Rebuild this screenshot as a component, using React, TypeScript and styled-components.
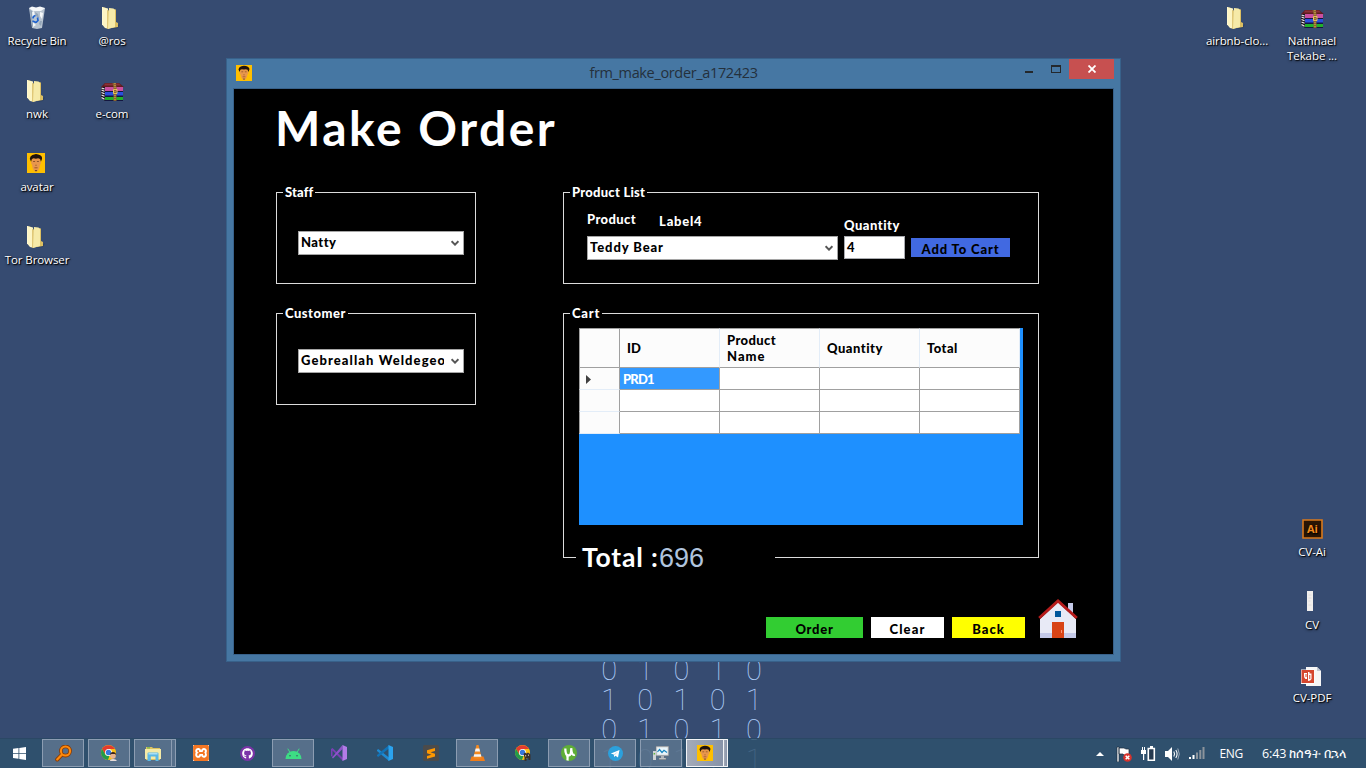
import React from 'react';
import styled, { createGlobalStyle, css } from 'styled-components';
import { FaGithub } from 'react-icons/fa';
import { SiXampp } from 'react-icons/si';

const gothic = '"Century Gothic", "URW Gothic", Lato, "Liberation Sans", sans-serif';
const system = '"Segoe UI", "Open Sans", "Noto Sans", sans-serif';

const GlobalStyle = createGlobalStyle`
  * { box-sizing: border-box; }
  body { margin: 0; overflow: hidden; }
  svg { display: block; flex: none; }
`;

/* ---------- Desktop ---------- */

const Desktop = styled.div`
  position: relative;
  display: flex;
  flex-direction: column;
  width: 1366px;
  height: 768px;
  overflow: hidden;
  background: #364b71;
  font-family: ${system};
`;

const IconGrid = styled.div`
  flex: 1;
  display: grid;
  grid-template-columns: repeat(18, 75px);
  grid-template-rows: repeat(10, 73px);
`;

const Shortcut = styled.div<{ $col: number; $row: number }>`
  grid-column: ${p => p.$col};
  grid-row: ${p => p.$row};
  display: flex;
  flex-direction: column;
  align-items: center;
  gap: 3px;
  padding: 6px 1px 0 0;
  color: #fff;
  font-size: 11.5px;
  line-height: 15px;
  letter-spacing: -0.08px;
  text-align: center;
  white-space: nowrap;
  text-shadow: 1px 1px 1px #000, 0 1px 3px rgba(0, 0, 0, 0.8);
`;

const ShortcutIcon = styled.div<{ $top?: number; $right?: number }>`
  height: 24px;
  padding: ${p => p.$top ?? 0}px ${p => p.$right ?? 0}px 0 0;
`;

const ShortcutName = styled.span`
  white-space: pre-line;
`;

const Wallpaper = styled.div`
  position: absolute;
  left: 591px;
  top: 655px;
  display: grid;
  grid-template-columns: repeat(5, 36.2px);
  grid-auto-rows: 30px;
  justify-items: center;
  color: #b0cffa;
  font: 100 29px/30px Roboto, Lato, sans-serif;
`;

/* ---------- Window ---------- */

const Window = styled.section`
  position: absolute;
  left: 226px;
  top: 58px;
  display: flex;
  flex-direction: column;
  width: 895px;
  height: 604px;
  padding: 0 6px 6px;
  border: 1px solid #38618a;
  background: #4677a3;
`;

const TitleBar = styled.header`
  display: grid;
  grid-template-columns: 145px 1fr 145px;
  height: 29px;
  flex: none;
`;

const TitleIcon = styled.div`
  padding: 6px 0 0 3px;
`;

const TitleText = styled.div`
  text-align: center;
  color: #24303c;
  font-size: 14.5px;
  line-height: 28px;
  letter-spacing: -0.35px;
`;

const Controls = styled.div`
  display: flex;
  justify-content: flex-end;
`;

const Control = styled.button<{ $close?: boolean }>`
  display: flex;
  align-items: center;
  justify-content: center;
  width: ${p => (p.$close ? 45 : 27)}px;
  height: 20px;
  padding: 0;
  border: 0;
  background: ${p => (p.$close ? '#c75050' : 'transparent')};
`;

const Client = styled.main`
  flex: 1;
  display: flex;
  flex-direction: column;
  border: 1px solid #38618a;
  background: #000;
  color: #fff;
  font: 900 13px/16px ${gothic};
`;

const Label = styled.span<{ $track?: number }>`
  letter-spacing: ${p => p.$track ?? 0.45}px;
  white-space: nowrap;
`;

const Heading = styled.h1`
  margin: 0;
  height: 103px;
  padding: 9px 0 0 41px;
  font: 700 48px/60px ${gothic};
  letter-spacing: 2.5px;
`;

const Form = styled.div`
  display: grid;
  grid-template-columns: 200px 476px;
  column-gap: 87px;
  row-gap: 29px;
  padding-left: 42px;
  align-items: start;
`;

const Group = styled.div<{ $height: number; $pad: string }>`
  position: relative;
  height: ${p => p.$height}px;
  padding: ${p => p.$pad};
  border: 1px solid #dcdcdc;
`;

const Legend = styled.div`
  position: absolute;
  left: 6px;
  top: -9px;
  padding: 0 2px;
  background: #000;
`;

const Select = styled.div<{ $width: number }>`
  display: flex;
  align-items: center;
  justify-content: space-between;
  width: ${p => p.$width}px;
  height: 24px;
  padding: 0 4px 0 2px;
  border: 1px solid #a5a5a5;
  background: #fff;
  color: #000;
`;

const SelectValue = styled.div`
  width: 143px;
  overflow: hidden;
  line-height: 18px;
  margin-top: -2px;
`;

const ProductRow = styled.div`
  display: flex;
  align-items: flex-start;
  gap: 6px;
`;

const Field = styled.div`
  display: flex;
  flex-direction: column;
`;

const FieldLabels = styled.div<{ $top: number }>`
  display: flex;
  gap: 23px;
  height: 43px;
  padding-top: ${p => p.$top}px;
`;

const Lowered = styled.div`
  padding-top: 2px;
`;

const TextInput = styled.div`
  width: 61px;
  height: 23px;
  padding: 2px 2px;
  border: 1px solid #a9abb0;
  background: #fff;
  color: #000;
`;

const buttonColors = { blue: '#4169e1', green: '#32cd32', white: '#fff', yellow: '#ff0' };

const Button = styled.button<{ $tone: keyof typeof buttonColors; $width: number; $compact?: boolean }>`
  display: flex;
  align-items: flex-end;
  justify-content: center;
  width: ${p => p.$width}px;
  height: ${p => (p.$compact ? 19 : 21)}px;
  padding: 0;
  border: 0;
  background: ${p => buttonColors[p.$tone]};
  color: #000;
  font: inherit;
  line-height: ${p => (p.$compact ? 15 : 17)}px;
`;

const AddSlot = styled.div`
  padding-top: 45px;
`;

/* ---------- Cart table ---------- */

const CartPane = styled.div`
  width: 444px;
  height: 197px;
  background: #1e90ff;
`;

const Table = styled.div`
  display: grid;
  grid-template-columns: 41px repeat(4, 100px);
  grid-template-rows: 40px repeat(3, 22px);
  width: 441px;
`;

const HeadCell = styled.div<{ $corner?: boolean }>`
  display: flex;
  align-items: center;
  padding-left: 7px;
  border: 1px solid #a0a0a0;
  border-left: ${p => (p.$corner ? '1px solid #a0a0a0' : '0')};
  border-right-color: ${p => (p.$corner ? '#a0a0a0' : '#e3edf8')};
  background: #fcfcfc;
  color: #000;
`;

const RowHead = styled.div`
  display: flex;
  align-items: center;
  padding: 1px 0 0 6px;
  border: 1px solid #a0a0a0;
  border-top: 0;
  border-bottom-color: #e3edf8;
  background: #fcfcfc;
`;

const Cell = styled.div<{ $selected?: boolean }>`
  display: flex;
  align-items: center;
  padding: 1px 0 0 3px;
  border-right: 1px solid #a0a0a0;
  border-bottom: 1px solid #a0a0a0;
  background: ${p => (p.$selected ? '#3399ff' : '#fff')};
  color: #fff;
`;

const TotalBar = styled.div`
  position: absolute;
  left: 12px;
  bottom: -16px;
  display: flex;
  align-items: baseline;
  width: 199px;
  height: 32px;
  padding-left: 6px;
  background: #000;
  line-height: 32px;
`;

const TotalCaption = styled.div`
  width: 77px;
  font-size: 26.5px;
  font-weight: 700;
  letter-spacing: 0.85px;
  white-space: nowrap;
`;

const TotalValue = styled.div`
  color: #b0c4de;
  font: 400 27px/32px "Liberation Sans", Arial, sans-serif;
`;

const Actions = styled.footer`
  display: flex;
  align-items: flex-end;
  justify-content: flex-end;
  gap: 8px;
  margin-top: auto;
  padding: 0 35px 16px 0;
`;

const HomeLink = styled.div`
  margin-left: 5px;
`;

/* ---------- Taskbar ---------- */

const Taskbar = styled.nav`
  position: relative;
  display: flex;
  align-items: stretch;
  height: 30px;
  flex: none;
  border-top: 1px solid #2b4865;
  background: rgba(46, 81, 109, 0.84);
`;

const StartButton = styled.div`
  display: flex;
  align-items: center;
  width: 42px;
  padding-left: 13px;
`;

const Tasks = styled.div`
  display: flex;
  gap: 4px;
`;

type TaskState = 'idle' | 'open' | 'active';

const frame = css<{ $state: TaskState }>`
  border: 1px solid ${p => (p.$state === 'active' ? '#f2f4f7' : '#8c9db2')};
  background: ${p =>
    p.$state === 'active' ? 'linear-gradient(90deg, #a4abb9, #8793a8)' : 'rgba(112, 131, 157, 0.62)'};
`;

const Task = styled.div<{ $state: TaskState; $stacked?: boolean }>`
  display: flex;
  align-items: center;
  justify-content: center;
  width: ${p => (p.$stacked ? 38 : 42)}px;
  height: 28px;
  ${p => p.$state !== 'idle' && frame}
`;

const TaskGroup = styled.div`
  display: flex;
  width: 42px;
`;

const StackEdge = styled.div<{ $state: TaskState }>`
  flex: none;
  width: 4px;
  height: 28px;
  ${frame}
  border-left: 0;
`;

const Tray = styled.div`
  display: flex;
  align-items: center;
  gap: 9px;
  margin-left: auto;
  padding-right: 21px;
  color: #fff;
  font-size: 12px;
`;

const Overflow = styled.div`
  margin-right: 3px;
`;

const Language = styled.span`
  margin-left: 5px;
  letter-spacing: -0.3px;
`;

const Clock = styled.span`
  width: 83px;
  margin-left: 10px;
  font-size: 12.5px;
  letter-spacing: -0.12px;
  white-space: nowrap;
`;

const GithubDisc = styled.div`
  display: flex;
  align-items: center;
  justify-content: center;
  width: 15px;
  height: 15px;
  border-radius: 50%;
  background: #7b34a8;
  color: #fff;
`;

const XamppTile = styled.div`
  display: flex;
  width: 16px;
  height: 16px;
  background: #fff;
  color: #f37623;
`;

/* ---------- Drawings ---------- */

const Avatar = ({ w = 16, h = 16 }: { w?: number; h?: number }) => (
  <svg width={w} height={h} viewBox="0 0 16 16" preserveAspectRatio="none">
    <path fill="#ffbf00" d="M0 0h16v16H0z" />
    <path fill="#e8964c" d="M4.500 4.500q3.500-1.500 7 0l.3 2 .7.300-.4 2.200-.6.200q-.3 3.800-2 5-1.500 1.100-3 0-1.700-1.200-2-5l-.6-.2-.4-2.200.7-.3z" />
    <path fill="#20120d" d="M3.600 7 2.500 4.500l.6-1.700L4.800 1.500l1.600-.4L8 .8l2 .3 1.800.7L13.200 3l.2 1.600L12.400 7l-.8-2.200-1.700-.6-2 .3-2-.3-1.500.6z" />
    <path stroke="#6b3a1e" strokeWidth=".6" d="M5.400 6.800h1.800M8.800 6.800h1.800M7.500 9.800h1" />
    <path fill="#8f4f2a" d="M6.600 11.500h2.800v.7H6.600z" />
    <path fill="#3a2014" d="M6.800 13.700h2.400L8 14.700z" />
  </svg>
);

const Folder = () => (
  <svg width="22" height="24" viewBox="0 0 22 24">
    <path fill="#26354f" opacity=".5" d="M15 21l5-3-2 4-6 1z" />
    <path fill="#dcbf62" d="M13 3l3 .5V16l2 1v4l-6 1z" />
    <path fill="#d8bb63" d="M2 1l4 1v18l-4-2z" />
    <path fill="#fdf5c5" d="M2 1l6 1.500L7 22.500 5 22l-3-3.500z" />
    <path fill="#e0c878" d="M7 4l4 1v17l-4 1z" />
    <path fill="#f6eaa8" d="M9 2l4.500.5L15 4v17l-7 2z" />
    <path fill="#fff8cf" d="M2 1h1v18H2z" />
  </svg>
);

const RecycleBin = () => (
  <svg width="20" height="24" viewBox="0 0 20 24">
    <path fill="#c3ced9" fillOpacity=".92" d="M2 2h16l-3 20-5 1-5-1z" />
    <path fill="#f5f8fa" d="M2 2l3-1.500 4 1 4-1 5 1.500-4 3H6zM4 7l3-2 1 5-3 4zM13 6l3 1-1 6-2-3zM6 16l3 3-3 2z" />
    <path fill="#93a5b8" d="M8 6l3 2 1 4-3-2zM13 15h2l-1 5-2-2zM3 4l2 1 1 16-1-1z" />
    <path fill="none" stroke="#1e62cf" strokeWidth="1.700" d="M8.500 9.500a3 3 0 00-2.500 3M5.500 15l3.500 1.500M10.500 11.500l.5 3-2 2" />
  </svg>
);

const Archive = () => (
  <svg width="23" height="18" viewBox="0 0 23 18">
    <path fill="#5e1c20" d="M4 0h14l5 4H0z" />
    <path fill="#8b3137" d="M4 .5h14l2 2H3z" />
    <path fill="#1c1620" d="M0 4h4v14l-4-3z" />
    <path fill="#c94f9f" d="M4 4h18v4H4z" />
    <path fill="#2a4fdc" d="M4 9h18v4H4z" />
    <path fill="#20b02a" d="M4 14h18v3.500H4z" />
    <path fill="#141640" d="M4 8h18v1H4zM4 12.500h18V14H4zM4 17h18v1H4z" />
    <path stroke="#f0edf0" strokeWidth="1.200" d="M.5 5l3 1M.5 7l3 1.200M.5 9.500l3 1.200M.5 12l3 1.200M.5 14.500l3 1.800" />
    <path fill="#8b642e" d="M11.500 0h3l1 4v14h-3V4z" />
    <path fill="none" stroke="#e8c75c" strokeWidth="1" d="M12.500 6.500h3.500v4h-3.500z" />
    <path stroke="#d8b050" strokeDasharray="1 1" d="M14 0v18" />
  </svg>
);

const IllustratorFile = () => (
  <svg width="21" height="20" viewBox="0 0 21 20">
    <path fill="#2a1504" stroke="#d9791c" strokeWidth="1.600" d="M1 1h19v18H1z" />
    <text x="10.500" y="13.500" fill="#f28a1c" fontFamily="Open Sans" fontSize="11" fontWeight="700" textAnchor="middle">Ai</text>
  </svg>
);

const CvFile = () => (
  <svg width="6" height="20" viewBox="0 0 6 20">
    <path fill="#f1efed" d="M0 0h6v20H0z" />
    <path stroke="#ddd7d5" strokeWidth=".8" d="M1.500 4h3M1.500 7h3M1.500 10h2M1.500 14h3" />
  </svg>
);

const PdfFile = () => (
  <svg width="20" height="19" viewBox="0 0 20 19">
    <path fill="#f7f7f7" d="M5 0h11l4 4v15H5z" />
    <path fill="#c3c9d2" d="M16 0l4 4h-4z" />
    <path fill="#fff" d="M0 2.500h13.500v14.500H0z" />
    <path fill="#d5472f" d="M.5 3h12.500v13H.5z" />
    <path fill="#fff" d="M3 6h3v6H4.500Q3 11 3 9zM7 5h1.500v1.500h2V12q-1 2-3.500 2z" />
    <path stroke="#d5472f" d="M5 7v3M8.800 8v4" />
  </svg>
);

const House = () => (
  <svg width="40" height="39" viewBox="0 0 40 39">
    <path fill="#c5cae9" d="M30 4h5v15h-5z" />
    <path fill="#e8eaf6" d="M2 20L20 3l18 17v19H2z" />
    <path fill="#c5cae9" d="M2 34h36v5H2z" />
    <path fill="#d84315" d="M14 23h12v16H14z" />
    <path fill="#01579b" d="M17 12h6v6h-6z" />
    <path fill="none" stroke="#b71c1c" strokeWidth="3" d="M1.200 19L20 2l18.800 17" />
    <path fill="#ffab91" d="M23 31h.8v3H23z" />
  </svg>
);

const Chevron = () => (
  <svg width="8" height="6" viewBox="0 0 8 6">
    <path fill="none" stroke="#555" strokeWidth="1.900" d="M.6 1.200L4 4.700l3.400-3.500" />
  </svg>
);

const WindowsLogo = () => (
  <svg width="13" height="13" viewBox="0 0 13 13">
    <path fill="#fff" d="M0 1.800L5.500 1v5H0zM6.300.9L13 0v6H6.300zM0 6.800h5.500v5L0 11zM6.300 6.800H13V13l-6.700-.9z" />
  </svg>
);

const Search = () => (
  <svg width="17" height="17" viewBox="0 0 17 17">
    <path stroke="#8b3c05" strokeWidth="4" strokeLinecap="round" d="M2.200 14.500l4.500-4.700" />
    <circle cx="10.500" cy="6" r="4.600" fill="none" stroke="#8b3c05" strokeWidth="3.600" />
    <path stroke="#ff8a0c" strokeWidth="2.200" strokeLinecap="round" d="M2.200 14.500l4.500-4.700" />
    <circle cx="10.500" cy="6" r="4.600" fill="none" stroke="#ff8a0c" strokeWidth="2" />
  </svg>
);

const Chrome = ({ badge }: { badge: 'face' | 'dark' }) => (
  <svg width="16" height="16" viewBox="0 0 16 16">
    <circle cx="7.500" cy="7.500" r="7.500" fill="#fbc116" />
    <path fill="#e33b2e" d="M1 3.800A7.500 7.500 0 0114 4H7.500L4.300 9.300z" />
    <path fill="#229b4a" d="M1 3.800l3.300 5.600 4 1.900L7 15A7.500 7.500 0 011 3.800z" />
    <circle cx="7.500" cy="7.500" r="3.500" fill="#fff" />
    <circle cx="7.500" cy="7.500" r="2.700" fill="#3778dd" />
    {badge === 'face' ? (
      <>
        <circle cx="12" cy="11" r="2.800" fill="#e9b28d" />
        <path fill="#3c231a" d="M9 10q.2-3 3-3t3.200 3l-1.200-1h-3.500z" />
        <path fill="#e8dcd8" d="M9 16q0-2 3-2t4 2z" />
      </>
    ) : (
      <>
        <path fill="#3a302d" d="M8.500 9l1.500-1.500 1.500 1 1.500-1 2.500 2V15h-2v-2h-2v3h-2v-3.500z" />
        <path fill="#b8a79a" d="M10 10h1.200v1.500H10zM13 9.500h1V11h-1z" />
      </>
    )}
  </svg>
);

const Explorer = () => (
  <svg width="16" height="15" viewBox="0 0 16 15">
    <path fill="#dcc25f" d="M1 1h6l1 1h7v12H1z" />
    <path fill="#f5eaa6" d="M0 3h16v10H0z" />
    <path fill="#58b848" d="M2 1.400h3v1H2z" />
    <path fill="#5bb8e6" d="M2.500 7.500q0-1 1-1h9q1 0 1 1V15h-3v-4.500H5.800V15H2.500z" />
    <path fill="#a8def5" d="M3.500 7h9v1.500h-9z" />
  </svg>
);

const Android = () => (
  <svg width="17" height="11" viewBox="0 0 17 11">
    <path fill="#3ddc84" d="M.5 11a8 8 0 0116 0z" />
    <path stroke="#3ddc84" strokeWidth="1" strokeLinecap="round" d="M3 1l2 3.500M14 1l-2 3.500" />
    <circle cx="5" cy="7.700" r=".8" fill="#3b5a66" />
    <circle cx="12" cy="7.700" r=".8" fill="#3b5a66" />
  </svg>
);

const VisualStudio = () => (
  <svg width="16" height="16" viewBox="0 0 16 16">
    <path fill="#7a3fb5" d="M0 4l1.500-1L12 13v3L1.500 5.500V12L0 11z" />
    <path fill="#8f52cc" d="M1 12.500L11.500 0v4L2 13.500z" />
    <path fill="#b27be8" d="M11.500 0L16 2v12l-4.500 2z" />
  </svg>
);

const VSCode = () => (
  <svg width="16" height="16" viewBox="0 0 16 16">
    <path fill="#1f8ad2" d="M0 5l1.200-1L12 12.500V16L0 6z" />
    <path fill="#1272b6" d="M0 11l1.200 1L12 3.500V0L0 10z" />
    <path fill="#2ba3ef" d="M11.500 0L16 2v12l-4.500 2z" />
  </svg>
);

const Sublime = () => (
  <svg width="16" height="16" viewBox="0 0 16 16">
    <rect width="16" height="16" rx="1.500" fill="#4b4b4b" />
    <path fill="#ff9800" d="M4 5.300L12 3v3L7.500 7.300 12 8.700v2.800L4 13.800V11l4.500-1.300L4 8.300z" />
  </svg>
);

const Vlc = () => (
  <svg width="15" height="16" viewBox="0 0 15 16">
    <path fill="#ef7d1a" d="M1.500 11.500h12L15 16H0z" />
    <path fill="#f58a1f" d="M6.500 0h2l3.300 13q-4.300 1.500-8.600 0z" />
    <path fill="#f4f4f4" d="M5.700 3.500h3.600l.8 3H4.900zM4.200 9.300h6.600l.6 2.500H3.600z" />
  </svg>
);

const UTorrent = () => (
  <svg width="16" height="16" viewBox="0 0 16 16">
    <circle cx="8" cy="8" r="8" fill="#5fae36" />
    <path fill="none" stroke="#fff" strokeWidth="2.300" d="M4.300 3.500q0 7 3.200 7t2.700-7.300q.2 7.800 3.600 6.500M6 10.500q1 1.500.5 5" />
  </svg>
);

const Telegram = () => (
  <svg width="15" height="15" viewBox="0 0 15 15">
    <circle cx="7.500" cy="7.500" r="7.500" fill="#2ba0dc" />
    <path fill="#fff" d="M2.800 7.400L11.500 4 10 11.500 7.500 9.700l-1.300 1.200-.4-2.300z" />
    <path fill="#b6d9ee" d="M5.800 8.600L10 5.500 6.800 9z" />
  </svg>
);

const Monitor = () => (
  <svg width="16" height="14" viewBox="0 0 16 14">
    <path fill="#d9dcde" stroke="#777" strokeWidth=".5" d="M3 .3h12.700v9.500H3zM6 12h7v1.500H6z" />
    <path fill="#eaf6fc" d="M4.300 1.600h10v6.900h-10z" />
    <path fill="none" stroke="#1a86c0" strokeWidth="1.200" d="M4.500 6l2-2.500 2.500 3 2-2.200 3 2.200" />
    <path fill="#cfd2d4" d="M0 5h3v9H0z" />
    <path fill="#5fb440" d="M.6 7h1.500v1.500H.6z" />
    <path fill="#aeb3b7" d="M8 10h3v2H8z" />
  </svg>
);

const TrayArrow = () => (
  <svg width="8" height="4" viewBox="0 0 8 4"><path fill="#fff" d="M4 0l4 4H0z" /></svg>
);
const Flag = () => (
  <svg width="16" height="16" viewBox="0 0 16 16">
    <path fill="#fff" stroke="#1d2c3d" strokeWidth=".7" d="M1 1h2v15H1zM3 2h5l2 1h3v6H8L7 8H3z" />
    <circle cx="11.500" cy="11.500" r="4.300" fill="#d8322c" />
    <path stroke="#fff" strokeWidth="1.500" d="M9.700 9.700l3.600 3.600M13.300 9.700l-3.600 3.600" />
  </svg>
);
const Battery = () => (
  <svg width="15" height="15" viewBox="0 0 15 15">
    <path fill="#24384e" stroke="#fff" strokeWidth="1.600" d="M7.300 2.500h6v11.700h-6z" />
    <path fill="#fff" d="M9 0h3v2H9zM0 4h5v4H0zM1 1h1v3H1zM3 1h1v3H3zM2 8h1.200v6H2z" />
  </svg>
);
const Speaker = () => (
  <svg width="15" height="14" viewBox="0 0 15 14">
    <path fill="#fff" d="M0 4h3l4-4v14l-4-4H0z" />
    <path fill="none" stroke="#fff" strokeWidth="1.100" d="M8.800 4.500q1.500 2.500 0 5M10.800 3q2.600 4 0 8" />
    <path fill="none" stroke="#a9b5c2" strokeWidth=".9" d="M12.800 1.500q3 5.500 0 11" />
  </svg>
);
const Signal = () => (
  <svg width="16" height="13" viewBox="0 0 16 13">
    <path fill="#fff" d="M0 10h2v2H0zM3.500 8h2v4h-2z" />
    <path fill="#8c949c" d="M7 5.500h2V12H7zM10.300 3h2v9h-2zM13.500 0h2v12h-2z" />
  </svg>
);

/* ---------- Page ---------- */

const binary = ['01010', '10101', '01010', '10101'];

const tasks: { name: string; state: TaskState; stacked?: boolean; icon: React.ReactNode }[] = [
  { name: 'search', state: 'open', icon: <Search /> },
  { name: 'chrome', state: 'open', icon: <Chrome badge="face" /> },
  { name: 'explorer', state: 'open', stacked: true, icon: <Explorer /> },
  { name: 'xampp', state: 'idle', icon: <XamppTile><SiXampp size={16} /></XamppTile> },
  { name: 'github', state: 'idle', icon: <GithubDisc><FaGithub size={11} /></GithubDisc> },
  { name: 'android', state: 'open', icon: <Android /> },
  { name: 'visual-studio', state: 'idle', icon: <VisualStudio /> },
  { name: 'vscode', state: 'idle', icon: <VSCode /> },
  { name: 'sublime', state: 'idle', icon: <Sublime /> },
  { name: 'vlc', state: 'open', icon: <Vlc /> },
  { name: 'chrome-alt', state: 'idle', icon: <Chrome badge="dark" /> },
  { name: 'utorrent', state: 'open', icon: <UTorrent /> },
  { name: 'telegram', state: 'open', icon: <Telegram /> },
  { name: 'monitor', state: 'open', icon: <Monitor /> },
  { name: 'order-app', state: 'active', stacked: true, icon: <Avatar /> },
];

type ShortcutData = { col: number; row: number; name: string; icon: React.ReactNode; top?: number; right?: number };

const shortcuts: ShortcutData[] = [
  { col: 1, row: 1, name: 'Recycle Bin', icon: <RecycleBin /> },
  { col: 2, row: 1, name: '@ros', icon: <Folder />, right: 2 },
  { col: 1, row: 2, name: 'nwk', icon: <Folder />, right: 2 },
  { col: 2, row: 2, name: 'e-com', icon: <Archive />, top: 4 },
  { col: 1, row: 3, name: 'avatar', icon: <Avatar w={18} h={20} />, top: 1, right: 2 },
  { col: 1, row: 4, name: 'Tor Browser', icon: <Folder />, right: 2 },
  { col: 17, row: 1, name: 'airbnb-clo...', icon: <Folder />, right: 2 },
  { col: 18, row: 1, name: 'Nathnael\nTekabe ...', icon: <Archive />, top: 4 },
  { col: 18, row: 8, name: 'CV-Ai', icon: <IllustratorFile />, top: 2 },
  { col: 18, row: 9, name: 'CV', icon: <CvFile />, top: 1, right: 4 },
  { col: 18, row: 10, name: 'CV-PDF', icon: <PdfFile />, top: 4, right: 2 },
];

export default function App() {
  return (
    <Desktop>
      <GlobalStyle />
      <Wallpaper>
        {binary.flatMap((line, r) => [...line].map((digit, c) => <span key={`${r}-${c}`}>{digit}</span>))}
      </Wallpaper>
      <IconGrid>
        {shortcuts.map(s => (
          <Shortcut key={s.name} $col={s.col} $row={s.row}>
            <ShortcutIcon $top={s.top} $right={s.right}>{s.icon}</ShortcutIcon>
            <ShortcutName>{s.name}</ShortcutName>
          </Shortcut>
        ))}
      </IconGrid>

      <Window>
        <TitleBar>
          <TitleIcon><Avatar /></TitleIcon>
          <TitleText>frm_make_order_a172423</TitleText>
          <Controls>
            <Control>
              <svg width="8" height="10" viewBox="0 0 8 10"><path fill="#24282c" d="M0 7h8v2H0z" /></svg>
            </Control>
            <Control>
              <svg width="10" height="8" viewBox="0 0 10 8"><path fill="#24282c" fillRule="evenodd" d="M0 0h10v8H0zM1 2h8v5H1z" /></svg>
            </Control>
            <Control $close>
              <svg width="8" height="8" viewBox="0 0 8 8"><path stroke="#fff" strokeWidth="1.800" d="M.5.5l7 7M7.500.5l-7 7" /></svg>
            </Control>
          </Controls>
        </TitleBar>

        <Client>
          <Heading>Make Order</Heading>
          <Form>
            <Group $height={92} $pad="38px 0 0 21px">
              <Legend><Label $track={0.15}>Staff</Label></Legend>
              <Select $width={166}><SelectValue><Label>Natty</Label></SelectValue><Chevron /></Select>
            </Group>

            <Group $height={92} $pad="0 0 0 23px">
              <Legend><Label $track={0.25}>Product List</Label></Legend>
              <ProductRow>
                <Field>
                  <FieldLabels $top={18}>
                    <Label $track={0.4}>Product</Label>
                    <Lowered><Label $track={0.75}>Label4</Label></Lowered>
                  </FieldLabels>
                  <Select $width={251}><SelectValue><Label $track={0.9}>Teddy Bear</Label></SelectValue><Chevron /></Select>
                </Field>
                <Field>
                  <FieldLabels $top={24}><Label $track={0.5}>Quantity</Label></FieldLabels>
                  <TextInput>4</TextInput>
                </Field>
                <AddSlot>
                  <Button $tone="blue" $width={99} $compact><Label $track={0.85}>Add To Cart</Label></Button>
                </AddSlot>
              </ProductRow>
            </Group>

            <Group $height={92} $pad="35px 0 0 21px">
              <Legend><Label $track={0.5}>Customer</Label></Legend>
              <Select $width={166}><SelectValue><Label $track={1.08}>Gebreallah Weldegeorgis</Label></SelectValue><Chevron /></Select>
            </Group>

            <Group $height={245} $pad="14px 0 0 15px">
              <Legend><Label $track={0.8}>Cart</Label></Legend>
              <CartPane>
                <Table>
                  <HeadCell $corner />
                  <HeadCell><Label $track={0}>ID</Label></HeadCell>
                  <HeadCell><div><Label $track={0.4}>Product</Label><br /><Label $track={1}>Name</Label></div></HeadCell>
                  <HeadCell><Label $track={0.5}>Quantity</Label></HeadCell>
                  <HeadCell><Label>Total</Label></HeadCell>
                  {[0, 1, 2].map(row => (
                    <React.Fragment key={row}>
                      <RowHead>
                        {row === 0 && <svg width="5" height="9" viewBox="0 0 5 9"><path fill="#404040" d="M0 0l5 4.500L0 9z" /></svg>}
                      </RowHead>
                      <Cell $selected={row === 0}>{row === 0 && <Label $track={-0.8}>PRD1</Label>}</Cell>
                      <Cell /><Cell /><Cell />
                    </React.Fragment>
                  ))}
                </Table>
              </CartPane>
              <TotalBar><TotalCaption>Total :</TotalCaption><TotalValue>696</TotalValue></TotalBar>
            </Group>
          </Form>

          <Actions>
            <Button $tone="green" $width={97}><Label $track={0.75}>Order</Label></Button>
            <Button $tone="white" $width={73}><Label $track={1.15}>Clear</Label></Button>
            <Button $tone="yellow" $width={73}><Label $track={0.95}>Back</Label></Button>
            <HomeLink><House /></HomeLink>
          </Actions>
        </Client>
      </Window>

      <Taskbar>
        <StartButton><WindowsLogo /></StartButton>
        <Tasks>
          {tasks.map(t =>
            t.stacked ? (
              <TaskGroup key={t.name}><Task $state={t.state} $stacked>{t.icon}</Task><StackEdge $state={t.state} /></TaskGroup>
            ) : (
              <Task key={t.name} $state={t.state}>{t.icon}</Task>
            ),
          )}
        </Tasks>
        <Tray>
          <Overflow><TrayArrow /></Overflow>
          <Flag />
          <Battery />
          <Speaker />
          <Signal />
          <Language>ENG</Language>
          <Clock>6:43 ከሰዓት በኋላ</Clock>
        </Tray>
      </Taskbar>
    </Desktop>
  );
}
